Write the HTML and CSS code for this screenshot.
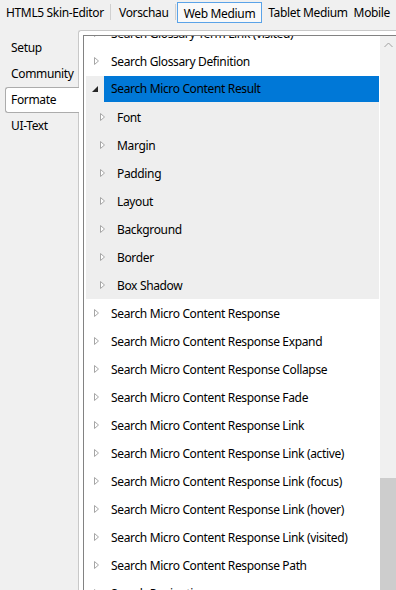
FILE: index.html
```html
<!DOCTYPE html>
<html lang="de">
<head>
  <meta charset="UTF-8">
  <meta name="viewport" content="width=device-width, initial-scale=1.0">
  <title>HTML5 Skin-Editor</title>
  <link rel="stylesheet" href="styles.css">
</head>
<body>

<div class="barra-topo">
  <span class="aba-topo">HTML5 Skin-Editor</span>
  <span class="separador"></span>
  <span class="aba-topo">Vorschau</span>
  <span class="separador"></span>
  <span class="aba-topo ativa">Web Medium</span>
  <span class="aba-topo">Tablet Medium</span>
  <span class="aba-topo">Mobile</span>
</div>

<div class="principal">
  <div class="abas-laterais">
    <div class="aba-lateral">Setup</div>
    <div class="aba-lateral">Community</div>
    <div class="aba-lateral ativa">Formate</div>
    <div class="aba-lateral">UI-Text</div>
  </div>

  <div class="painel">
    <div class="arvore">
      <div class="lista">
        <div class="item primeiro"><span class="seta"><svg width="5" height="8"><path d="M0.5 0.5 L4.5 4 L0.5 7.5 Z" /></svg></span><span class="rotulo">Search Glossary Term Link (visited)</span></div>
        <div class="item"><span class="seta"><svg width="5" height="8"><path d="M0.5 0.5 L4.5 4 L0.5 7.5 Z" /></svg></span><span class="rotulo">Search Glossary Definition</span></div>

        <div class="grupo">
          <div class="item selecionado"><span class="seta aberta"><svg width="6" height="6"><path d="M6 0 L6 6 L0 6 Z" /></svg></span><span class="rotulo">Search Micro Content Result</span></div>
          <div class="item filho"><span class="seta"><svg width="5" height="8"><path d="M0.5 0.5 L4.5 4 L0.5 7.5 Z" /></svg></span><span class="rotulo">Font</span></div>
          <div class="item filho"><span class="seta"><svg width="5" height="8"><path d="M0.5 0.5 L4.5 4 L0.5 7.5 Z" /></svg></span><span class="rotulo">Margin</span></div>
          <div class="item filho"><span class="seta"><svg width="5" height="8"><path d="M0.5 0.5 L4.5 4 L0.5 7.5 Z" /></svg></span><span class="rotulo">Padding</span></div>
          <div class="item filho"><span class="seta"><svg width="5" height="8"><path d="M0.5 0.5 L4.5 4 L0.5 7.5 Z" /></svg></span><span class="rotulo">Layout</span></div>
          <div class="item filho"><span class="seta"><svg width="5" height="8"><path d="M0.5 0.5 L4.5 4 L0.5 7.5 Z" /></svg></span><span class="rotulo">Background</span></div>
          <div class="item filho"><span class="seta"><svg width="5" height="8"><path d="M0.5 0.5 L4.5 4 L0.5 7.5 Z" /></svg></span><span class="rotulo">Border</span></div>
          <div class="item filho"><span class="seta"><svg width="5" height="8"><path d="M0.5 0.5 L4.5 4 L0.5 7.5 Z" /></svg></span><span class="rotulo">Box Shadow</span></div>
        </div>

        <div class="item"><span class="seta"><svg width="5" height="8"><path d="M0.5 0.5 L4.5 4 L0.5 7.5 Z" /></svg></span><span class="rotulo">Search Micro Content Response</span></div>
        <div class="item"><span class="seta"><svg width="5" height="8"><path d="M0.5 0.5 L4.5 4 L0.5 7.5 Z" /></svg></span><span class="rotulo">Search Micro Content Response Expand</span></div>
        <div class="item"><span class="seta"><svg width="5" height="8"><path d="M0.5 0.5 L4.5 4 L0.5 7.5 Z" /></svg></span><span class="rotulo">Search Micro Content Response Collapse</span></div>
        <div class="item"><span class="seta"><svg width="5" height="8"><path d="M0.5 0.5 L4.5 4 L0.5 7.5 Z" /></svg></span><span class="rotulo">Search Micro Content Response Fade</span></div>
        <div class="item"><span class="seta"><svg width="5" height="8"><path d="M0.5 0.5 L4.5 4 L0.5 7.5 Z" /></svg></span><span class="rotulo">Search Micro Content Response Link</span></div>
        <div class="item"><span class="seta"><svg width="5" height="8"><path d="M0.5 0.5 L4.5 4 L0.5 7.5 Z" /></svg></span><span class="rotulo">Search Micro Content Response Link (active)</span></div>
        <div class="item"><span class="seta"><svg width="5" height="8"><path d="M0.5 0.5 L4.5 4 L0.5 7.5 Z" /></svg></span><span class="rotulo">Search Micro Content Response Link (focus)</span></div>
        <div class="item"><span class="seta"><svg width="5" height="8"><path d="M0.5 0.5 L4.5 4 L0.5 7.5 Z" /></svg></span><span class="rotulo">Search Micro Content Response Link (hover)</span></div>
        <div class="item"><span class="seta"><svg width="5" height="8"><path d="M0.5 0.5 L4.5 4 L0.5 7.5 Z" /></svg></span><span class="rotulo">Search Micro Content Response Link (visited)</span></div>
        <div class="item"><span class="seta"><svg width="5" height="8"><path d="M0.5 0.5 L4.5 4 L0.5 7.5 Z" /></svg></span><span class="rotulo">Search Micro Content Response Path</span></div>
        <div class="item"><span class="seta"><svg width="5" height="8"><path d="M0.5 0.5 L4.5 4 L0.5 7.5 Z" /></svg></span><span class="rotulo">Search Pagination</span></div>
      </div>

      <div class="rolagem">
        <div class="botao-cima"><svg width="9" height="6"><path d="M0.5 5 L4.5 1 L8.5 5" /></svg></div>
        <div class="trilho"></div>
        <div class="polegar"></div>
      </div>
    </div>
  </div>
</div>

</body>
</html>
```

FILE: styles.css
```css
body {
  margin: 0;
  padding: 0;
  height: 590px;
  overflow: hidden;
  background-color: #f0f0f0;
  font-family: "Noto Sans", "Liberation Sans", sans-serif;
  font-size: 12px;
  letter-spacing: -0.35px;
  color: #000;
}

/* abas de cima */
.barra-topo {
  display: flex;
  align-items: center;
  height: 24px;
  padding-left: 6px;
  white-space: nowrap;
}

.aba-topo {
  padding-right: 6px;
}

.separador {
  width: 1px;
  height: 16px;
  background-color: #d0d0d0;
  margin: 0 9px 0 0;
}

.aba-topo.ativa {
  border: 1px solid #5aa3e8;
  background-color: #f9f9f9;
  height: 21px;
  line-height: 21px;
  padding: 0 6px;
  margin-left: -7px;
  margin-right: 6px;
  box-sizing: border-box;
}

.principal {
  display: flex;
  height: 560px;
  margin-top: 6px;
}

/* abas da esquerda */
.abas-laterais {
  width: 78px;
  flex-shrink: 0;
  padding-top: 5px;
}

.aba-lateral {
  height: 26px;
  line-height: 26px;
  margin-left: 5px;
  padding-left: 6px;
  box-sizing: border-box;
}

.aba-lateral.ativa {
  position: relative;
  z-index: 2;
  background-color: #fff;
  border: 1px solid #acacac;
  border-right: none;
  border-radius: 3px 0 0 3px;
  padding-left: 5px;
  line-height: 24px;
  margin-right: -1px;
}

.painel {
  flex: 1;
  display: flex;
  background-color: #fff;
  border-left: 1px solid #c8c8c8;
  border-top: 1px solid #c8c8c8;
  border-top-left-radius: 3px;
  padding: 4px 0 0 4px;
  min-width: 0;
}

.arvore {
  flex: 1;
  display: flex;
  border-left: 1px solid #828282;
  border-top: 1px solid #828282;
  min-width: 0;
}

.lista {
  flex: 1;
  overflow: hidden;
  white-space: nowrap;
}

.item {
  display: flex;
  align-items: center;
  height: 28px;
  padding-left: 2px;
}

.item.primeiro {
  margin-top: -17px;
}

.seta {
  width: 18px;
  flex-shrink: 0;
  padding-left: 8px;
  box-sizing: border-box;
  display: flex;
  align-items: center;
}

.seta path {
  fill: #fff;
  stroke: #a6a6a6;
  stroke-width: 1;
}

.seta.aberta {
  padding-left: 6px;
}

.seta.aberta path {
  fill: #262626;
  stroke: none;
}

.rotulo {
  padding-left: 7px;
}

.grupo {
  margin: 1px 0 0 2px;
  background-color: #eeeeee;
}

.grupo .item {
  padding-left: 0;
}

.item.selecionado {
  height: 27px;
  align-items: flex-start;
}

.item.selecionado .seta {
  height: 26px;
}

.item.selecionado .rotulo {
  flex: 1;
  height: 26px;
  line-height: 26px;
  background-color: #0078d7;
}

.grupo .item.filho {
  padding-left: 6px;
}

/* barra de rolagem */
.rolagem {
  width: 16px;
  flex-shrink: 0;
  margin-left: 1px;
  background-color: #f0f0f0;
  display: flex;
  flex-direction: column;
}

.botao-cima {
  height: 17px;
  display: flex;
  align-items: center;
  justify-content: center;
}

.botao-cima path {
  fill: none;
  stroke: #a0a0a0;
  stroke-width: 1;
}

.trilho {
  flex: 1;
}

.polegar {
  height: 112px;
  background-color: #cdcdcd;
}
```
